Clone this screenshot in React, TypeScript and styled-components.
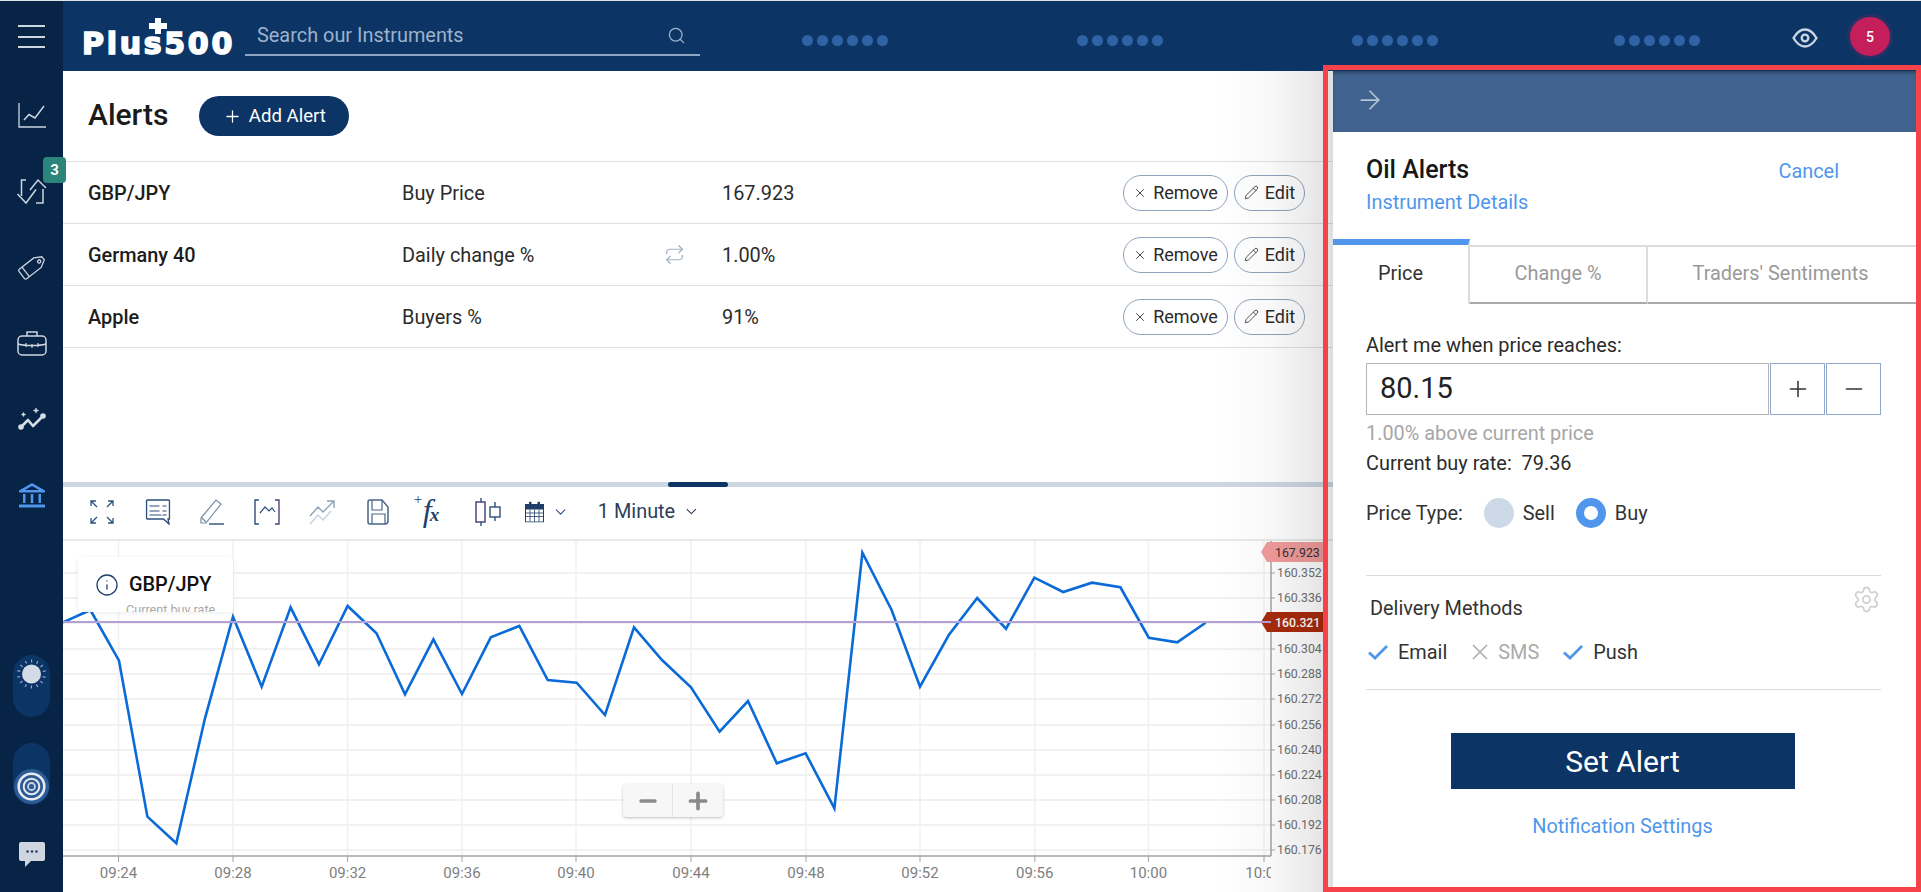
import React from "react";
import styled, { createGlobalStyle } from "styled-components";
import { ArrowRight, ChevronDown, Info, Minus, Pencil, Plus, Repeat, Search, Settings, X } from "lucide-react";

const GlobalStyle = createGlobalStyle`
  html, body { margin: 0; padding: 0; height: 100%; overflow: hidden; background: #fff; }
  body { font-family: Roboto, "Liberation Sans", sans-serif; color: #222; }
  #root { height: 100%; }
  * { box-sizing: border-box; }
`;

const NAVY = "#0c3566";
const BLUE = "#4f96ec";
const TEXT_SIZE = "19.9px";

const Page = styled.div`
  position: relative;
  display: grid;
  grid-template-columns: 63px 1fr;
  height: 892px;
  width: 1921px;
  border-top: 1px solid #dfe3e8;
  overflow: hidden;
`;

const Sidebar = styled.aside`
  display: flex;
  flex-direction: column;
  align-items: center;
  background: #072346;
  padding-bottom: 24px;
  position: relative;
  z-index: 5;
`;
const Burger = styled.div`
  height: 76px;
  width: 27px;
  flex: none;
  display: flex;
  flex-direction: column;
  gap: 8.5px;
  padding-top: 24px;
  span { display: block; height: 2px; background: #cdd5df; }
`;
const NavItem = styled.div`
  position: relative;
  height: 76px;
  flex: none;
  width: 100%;
  display: flex;
  align-items: center;
  justify-content: center;
  svg { overflow: visible; }
`;
const Badge = styled.span`
  position: absolute;
  left: 43px;
  top: 4px;
  width: 23px;
  height: 26px;
  background: #2b8578;
  border-radius: 4px;
  color: #fff;
  font-weight: 700;
  font-size: 15px;
  display: flex;
  align-items: center;
  justify-content: center;
`;
const Toggle = styled.div<{ $down?: boolean }>`
  width: 37px;
  height: 62px;
  border-radius: 19px;
  background: ${NAVY};
  flex: none;
  position: relative;
  margin-top: ${(p) => (p.$down ? "26px" : "auto")};
  display: flex;
  justify-content: center;
  align-items: ${(p) => (p.$down ? "flex-end" : "flex-start")};
`;
const ChatWrap = styled.div`
  margin-top: 37px;
  height: 26px;
  flex: none;
`;

const Right = styled.div`
  position: relative;
  display: flex;
  flex-direction: column;
  min-width: 0;
`;
const Header = styled.header`
  height: 70px;
  flex: none;
  background: ${NAVY};
  display: flex;
  align-items: center;
  position: relative;
  z-index: 4;
`;
const Logo = styled.div`
  position: relative;
  margin-left: 19px;
  width: 151px;
  height: 70px;
  flex: none;
  color: #fff;
  font-family: "DejaVu Sans", sans-serif;
  font-weight: 700;
  font-size: 30px;
  letter-spacing: 2.7px;
  line-height: 70px;
  padding-top: 8px;
  -webkit-text-stroke: 1.6px #fff;
  white-space: nowrap;
`;
const LogoCross = styled.svg`
  position: absolute;
  left: 67px;
  top: 17px;
`;
const SearchBox = styled.div`
  margin-left: 12px;
  width: 455px;
  height: 36px;
  margin-top: 3px;
  padding: 0 12px 3px;
  border-bottom: 2px solid #8fa6c2;
  color: #9db2cb;
  font-size: ${TEXT_SIZE};
  display: flex;
  align-items: center;
  justify-content: space-between;
  svg { margin-right: 2px; }
`;
const Quotes = styled.div`
  position: relative;
  flex: 1;
  display: flex;
  align-items: center;
  padding-left: 102px;
`;
const DotGroup = styled.div<{ $w: number }>`
  width: ${(p) => p.$w}px;
  display: flex;
  gap: 4px;
  flex: none;
  margin-top: 9px;
  i { width: 11px; height: 11px; border-radius: 50%; background: #2f63a6; display: block; }
`;
const EyeWrap = styled.div`
  margin-left: auto;
  margin-right: 32px;
  display: flex;
  margin-top: 3px;
`;
const Avatar = styled.div`
  width: 40px;
  height: 39px;
  border-radius: 50%;
  background: #c41e5b;
  box-shadow: 0 0 0 3px rgba(196, 30, 91, 0.15);
  color: #fff;
  font-size: 14px;
  font-weight: 500;
  margin-right: 31px;
  margin-top: 1px;
  display: flex;
  align-items: center;
  justify-content: center;
`;

const Body = styled.main`
  position: relative;
  flex: 1;
  display: flex;
  flex-direction: column;
  min-height: 0;
`;
const ListPane = styled.section`
  height: 411px;
  flex: none;
`;
const TitleRow = styled.div`
  height: 91px;
  padding: 25px 0 0 25px;
  display: flex;
  align-items: flex-start;
  gap: 31px;
  border-bottom: 1.5px solid #e0e0e0;
`;
const PageTitle = styled.h1`
  margin: 1px 0 0;
  font-size: 30px;
  font-weight: 500;
  line-height: 36px;
  color: #1a1a1a;
`;
const AddButton = styled.button`
  height: 40px;
  width: 150px;
  border: 0;
  border-radius: 20px;
  background: ${NAVY};
  color: #fff;
  font: 400 18.6px Roboto, sans-serif;
  display: flex;
  align-items: center;
  justify-content: center;
  gap: 7px;
  padding: 0;
`;
const Row = styled.div`
  height: 62px;
  display: grid;
  grid-template-columns: 314px 262px 58px 1fr auto;
  align-items: center;
  padding: 0 616px 0 25px;
  border-bottom: 1.5px solid #e0e0e0;
  font-size: ${TEXT_SIZE};
`;
const Instrument = styled.span`
  font-weight: 500;
  color: #1d1d1d;
  padding-top: 2px;
`;
const Cell = styled.span`
  color: #2b2b2b;
  padding-top: 2px;
`;
const RepeatSlot = styled.span`
  display: flex;
  color: #a5b2c2;
`;
const Actions = styled.div`
  display: flex;
  gap: 6px;
`;
const Pill = styled.button<{ $w: number }>`
  width: ${(p) => p.$w}px;
  height: 36px;
  border-radius: 18px;
  border: 1px solid #8ea3bc;
  background: #fff;
  color: #2b2b2b;
  font: 400 18px Roboto, sans-serif;
  display: flex;
  align-items: center;
  justify-content: center;
  gap: 6px;
  padding: 0;
`;

const Splitter = styled.div`
  position: relative;
  height: 5px;
  flex: none;
  background: #cdd6e3;
`;
const SplitHandle = styled.span`
  position: absolute;
  left: 605px;
  top: 0;
  width: 60px;
  height: 5px;
  border-radius: 3px;
  background: ${NAVY};
`;
const Toolbar = styled.div`
  height: 54px;
  flex: none;
  position: relative;
  border-bottom: 2px solid #e8e8e8;
`;
const ToolSlot = styled.span<{ $x: number }>`
  position: absolute;
  left: ${(p) => p.$x}px;
  top: 25px;
  transform: translate(-50%, -50%);
  display: flex;
  align-items: center;
  color: #2d4f7c;
`;
const Fx = styled.span`
  position: relative;
  font-family: "Liberation Serif", serif;
  font-style: italic;
  color: #1f3f6b;
  line-height: 30px;
  font-size: 32px;
  display: flex;
  align-items: baseline;
  b { font-size: 19px; font-weight: 700; margin-left: -2px; }
  sup {
    position: absolute;
    left: -9px;
    top: -6px;
    font-size: 15px;
    line-height: 20px;
    font-style: normal;
  }
`;
const Interval = styled.span`
  font-size: ${TEXT_SIZE};
  color: #2b3f5a;
  display: flex;
  align-items: center;
  gap: 8px;
  white-space: nowrap;
  margin-top: -1px;
`;

const ChartArea = styled.div`
  position: relative;
  flex: 1;
  min-height: 0;
`;
const ChartSvg = styled.svg`
  display: block;
  position: absolute;
  left: 0;
  top: 0;
  text { font-family: Roboto, sans-serif; }
`;
const InstrumentCard = styled.div`
  position: absolute;
  left: 15px;
  top: 16px;
  width: 155px;
  height: 55px;
  background: rgba(255, 255, 255, 0.94);
  border-radius: 4px;
  box-shadow: 0 1px 5px rgba(0, 0, 0, 0.08);
  overflow: hidden;
  padding: 16px 0 0 17px;
`;
const CardTitle = styled.div`
  display: flex;
  align-items: center;
  gap: 10px;
  font-size: ${TEXT_SIZE};
  font-weight: 500;
  color: #111;
  line-height: 22px;
  svg { color: #1f3f6f; }
`;
const CardSub = styled.div`
  margin: 5px 0 0 31px;
  font-size: 12.6px;
  line-height: 16px;
  color: #a8a8a8;
  white-space: nowrap;
`;
const ZoomControl = styled.div`
  position: absolute;
  left: 560px;
  top: 243px;
  width: 100px;
  height: 33px;
  background: #f7f7f7;
  border-radius: 4px;
  box-shadow: 0 1px 3px rgba(0, 0, 0, 0.25);
  display: grid;
  grid-template-columns: 50px 50px;
`;
const ZoomCell = styled.span<{ $sep?: boolean }>`
  display: flex;
  align-items: center;
  justify-content: center;
  color: #8a8a8a;
  border-right: ${(p) => (p.$sep ? "1px solid #e3e3e3" : "0")};
`;

const Panel = styled.aside`
  position: absolute;
  top: 0;
  bottom: 0;
  right: 4px;
  width: 584px;
  background: #fff;
  display: flex;
  flex-direction: column;
  z-index: 2;
  &::before {
    content: "";
    position: absolute;
    top: 0;
    bottom: 0;
    left: -120px;
    width: 120px;
    background: linear-gradient(to right, rgba(0,0,0,0) 0%, rgba(0,0,0,0.025) 45%, rgba(0,0,0,0.08) 80%, rgba(0,0,0,0.13) 100%);
    pointer-events: none;
  }
`;
const PanelBar = styled.div`
  height: 61px;
  flex: none;
  background: #3f628f;
  box-shadow: inset 0 3px 3px -1px rgba(0, 0, 0, 0.3);
  color: #b7c5d6;
  display: flex;
  align-items: center;
  padding: 0 0 4px 22px;
`;
const PanelHead = styled.div`
  height: 107px;
  flex: none;
  padding: 25px 78px 0 33px;
  display: flex;
  justify-content: space-between;
  align-items: flex-start;
`;
const PanelTitle = styled.div`
  font-size: 25px;
  font-weight: 500;
  line-height: 26px;
  color: #171717;
`;
const LinkText = styled.a`
  display: block;
  color: ${BLUE};
  font-size: ${TEXT_SIZE};
  line-height: 26px;
`;
const DetailsLink = styled(LinkText)`
  margin-top: 7px;
`;
const CancelLink = styled(LinkText)`
  margin-top: 2px;
`;
const Tabs = styled.div`
  display: flex;
  height: 65px;
  flex: none;
`;
const Tab = styled.div<{ $w?: number; $active?: boolean }>`
  ${(p) => (p.$w ? `width: ${p.$w}px; flex: none;` : "flex: 1; padding-right: 4px;")}
  display: flex;
  align-items: center;
  justify-content: center;
  font-size: ${TEXT_SIZE};
  padding-bottom: 3px;
  margin-top: ${(p) => (p.$active ? "0" : "6px")};
  color: ${(p) => (p.$active ? "#333" : "#999")};
  border-top: ${(p) => (p.$active ? `6px solid ${BLUE}` : "2px solid #dcdcdc")};
  border-bottom: ${(p) => (p.$active ? "0" : "2px solid #a9a9a9")};
  border-right: 2px solid #dcdcdc;
  &:last-child { border-right: 0; }
`;
const Form = styled.div`
  padding: 30px 36px 0 33px;
  display: flex;
  flex-direction: column;
  font-size: ${TEXT_SIZE};
`;
const Line = styled.div<{ $mt?: number; $muted?: boolean }>`
  line-height: 24px;
  margin-top: ${(p) => p.$mt || 0}px;
  color: ${(p) => (p.$muted ? "#a6a6a6" : "#2b2b2b")};
`;
const Stepper = styled.div`
  display: grid;
  grid-template-columns: 1fr 55px 55px;
  gap: 1px;
  height: 52px;
  margin-top: 5px;
`;
const PriceInput = styled.div`
  border: 1px solid #b5b5b5;
  font-size: 29px;
  color: #222;
  padding: 0 0 3px 13px;
  display: flex;
  align-items: center;
`;
const StepButton = styled.div`
  border: 1px solid #8ea9c9;
  color: #333;
  display: flex;
  align-items: center;
  justify-content: center;
`;
const PriceType = styled.div`
  display: flex;
  align-items: center;
  height: 30px;
  margin-top: 22px;
  color: #333;
`;
const Radio = styled.span<{ $on?: boolean }>`
  width: 30px;
  height: 30px;
  border-radius: 50%;
  margin: 0 9px 0 21px;
  background: ${(p) => (p.$on ? "#fff" : "#cdd9e6")};
  border: ${(p) => (p.$on ? `8px solid ${BLUE}` : "0")};
  flex: none;
`;
const Rule = styled.div<{ $mt: number }>`
  height: 1px;
  background: #dcdcdc;
  margin-top: ${(p) => p.$mt}px;
  flex: none;
`;
const DeliveryHead = styled.div`
  display: flex;
  justify-content: space-between;
  align-items: flex-start;
  padding: 9px 0 0 4px;
  color: #333;
  span { margin-top: 12px; line-height: 24px; }
  svg { color: #cfcfcf; }
`;
const Methods = styled.div`
  display: flex;
  align-items: center;
  height: 24px;
  margin-top: 19px;
  padding-left: 2px;
`;
const Method = styled.span<{ $off?: boolean; $gap: number }>`
  display: flex;
  align-items: center;
  gap: 10px;
  margin-right: ${(p) => p.$gap}px;
  color: ${(p) => (p.$off ? "#aaa" : "#333")};
  svg { flex: none; }
`;
const SetAlert = styled.button`
  align-self: center;
  width: 344px;
  height: 56px;
  margin: 43px 2px 0 0;
  border: 0;
  background: ${NAVY};
  color: #fff;
  font: 400 30px Roboto, sans-serif;
  padding: 0;
  flex: none;
`;
const NotifyLink = styled(LinkText)`
  align-self: center;
  margin: 25px 2px 0 0;
`;
const Annotation = styled.div`
  position: absolute;
  left: 1323px;
  top: 64px;
  right: 0;
  bottom: 0;
  border: 5px solid #f6424a;
  pointer-events: none;
  z-index: 9;
`;

const S = "#cdd5df";
const ChartIcon = () => (
  <svg width="28" height="25" fill="none" stroke={S} strokeWidth="1.3">
    <path d="M1 0V24H28" />
    <path d="M6 17L11 11.5L17 15L26 3" strokeWidth="1.5" />
  </svg>
);
const TradeIcon = () => (
  <svg width="29" height="25" fill="none" stroke={S} strokeWidth="1.5">
    <path d="M9 1H4.5V17" />
    <path d="M0.5 15L9 24L19 10.5" />
    <path d="M13 11L21 1L29 9" />
    <path d="M26 10V24H19" />
  </svg>
);
const TagIcon = () => (
  <svg width="28" height="26" fill="none" stroke={S} strokeWidth="1.3">
    <g transform="rotate(-38 14 13)">
      <path d="M1 8.500a1.500 1.500 0 0 1 1.500-1.500H21l7 4v4l-7 4H2.500A1.500 1.500 0 0 1 1 17.500Z" />
      <path d="M6 7V19" />
      <circle cx="23" cy="13" r="1.600" />
    </g>
  </svg>
);
const CaseIcon = () => (
  <svg width="30" height="25" fill="none" stroke={S} strokeWidth="1.5">
    <rect x="1" y="5" width="28" height="19" rx="4" />
    <path d="M10 5V1H20V5" />
    <path d="M1 13C8 15 22 15 29 13" />
    <path d="M9 12V16M15 13V17M21 12V16" strokeWidth="1.2" />
  </svg>
);
const SparkIcon = () => (
  <svg width="28" height="24" fill="none" stroke="#d6dde6" strokeWidth="2.600" strokeLinecap="round" strokeLinejoin="round">
    <path d="M3 20L10 13L15 19L25 9" />
    <circle cx="3" cy="20" r="1.500" fill="#d6dde6" />
    <circle cx="25" cy="9" r="1.500" fill="#d6dde6" />
    <path d="M4 7.500H7M5.500 6V9M16 3.500H20M18 1.500V5.500" strokeWidth="1.400" />
  </svg>
);
const BankIcon = () => (
  <svg width="26" height="25" fill={BLUE} stroke="none">
    <path d="M13 0L26 7.500V9.500H0V7.500ZM13 3L6 7H20Z" fillRule="evenodd" />
    <rect x="4" y="11" width="2.500" height="9" />
    <rect x="11.750" y="11" width="2.500" height="9" />
    <rect x="19.500" y="11" width="2.500" height="9" />
    <rect x="0" y="21.500" width="26" height="3" />
  </svg>
);
const SunKnob = () => {
  const rays = Array.from({ length: 14 }, (_, i) => (i * 360) / 14);
  return (
    <svg width="37" height="37" viewBox="0 0 37 37">
      <circle cx="18.500" cy="19" r="9.500" fill="#d3dbe6" />
      {rays.map((r) => (
        <rect key={r} x="18" y="4.500" width="1.200" height="3" fill="#93a8c2" transform={`rotate(${r} 18.500 19)`} />
      ))}
    </svg>
  );
};
const TargetKnob = () => (
  <svg width="37" height="37" viewBox="0 0 37 37">
    <circle cx="18.500" cy="18.500" r="17.500" fill="#2b5a95" />
    <circle cx="18.500" cy="18.500" r="12.800" fill="none" stroke="#e5eaf1" strokeWidth="2.600" />
    <circle cx="18.500" cy="18.500" r="7.800" fill="none" stroke="#e5eaf1" strokeWidth="2" />
    <circle cx="18.500" cy="18.500" r="3.500" fill="none" stroke="#c9d4e3" strokeWidth="1.800" />
  </svg>
);
const ChatIcon = () => (
  <svg width="26" height="26" viewBox="0 0 26 26">
    <path d="M2 0H24a2 2 0 0 1 2 2V17a2 2 0 0 1-2 2H12L6 25V19H2a2 2 0 0 1-2-2V2a2 2 0 0 1 2-2Z" fill="#cfd6e0" />
    <circle cx="8.500" cy="9.500" r="1.300" fill="#2a3f5f" />
    <circle cx="13" cy="9.500" r="1.300" fill="#2a3f5f" />
    <circle cx="17.500" cy="9.500" r="1.300" fill="#2a3f5f" />
  </svg>
);
const EyeIcon = () => (
  <svg width="26" height="20" viewBox="0 0 26 20" fill="none" stroke="#ccd6e2" strokeWidth="2.300">
    <path d="M1.500 10C5 4 9 1.500 13 1.500S21 4 24.500 10C21 16 17 18.500 13 18.500S5 16 1.500 10Z" />
    <circle cx="13" cy="10" r="3.300" />
  </svg>
);
const CheckMark = () => (
  <svg width="20" height="15" viewBox="0 0 20 15" fill="none" stroke={BLUE} strokeWidth="2.800">
    <path d="M1 7.500L7 13L19 1" />
  </svg>
);
const CrossMark = () => (
  <svg width="16" height="16" viewBox="0 0 16 16" fill="none" stroke="#a9a9a9" strokeWidth="1.500">
    <path d="M1 1L15 15M15 1L1 15" />
  </svg>
);

const ExpandIcon = () => (
  <svg width="24" height="24" fill="none" stroke="#2d4f7c" strokeWidth="1.300">
    <path d="M1 6V1H6M1 1L7 7" /><path d="M23 6V1H18M23 1L17 7" /><path d="M1 18V23H6M1 23L7 17" /><path d="M23 18V23H18M23 23L17 17" />
  </svg>
);
const NoteIcon = () => (
  <svg width="25" height="26" fill="none" stroke="#2d4f7c" strokeWidth="1.400">
    <path d="M2 1H23a1 1 0 0 1 1 1V20H22.500L23.500 25L18 20H2a1 1 0 0 1-1-1V2a1 1 0 0 1 1-1Z" />
    <path d="M4 7H14M4 12H14M17 12H21M4 16H16M17 16H21M17 7H21" strokeWidth="1.200" />
  </svg>
);
const PenIcon = () => (
  <svg width="24" height="26" fill="none" stroke="#7a8ca4" strokeWidth="1.200">
    <path d="M1 19L16 1L21 5L6 24H1Z" />
    <path d="M2 19L6 23" />
    <path d="M9 25H24" stroke="#2d4f7c" strokeWidth="1.400" />
  </svg>
);
const RangeIcon = () => (
  <svg width="26" height="26" fill="none" strokeWidth="1.400">
    <path d="M5 1H1V25H5" stroke="#2d4f7c" />
    <path d="M21 1H25V25H21" stroke="#5a3f7c" />
    <path d="M6 14L11 8L15 12L18 9L21 13" stroke="#2d4f7c" strokeWidth="1.200" />
  </svg>
);
const TrendIcon = () => (
  <svg width="26" height="26" fill="none" strokeWidth="1.400">
    <path d="M1 17L9 8L14 13L25 2M18 2H25V9" stroke="#8fa2bb" />
    <path d="M1 25L9 16L14 21L22 12" stroke="#c8d2df" />
  </svg>
);
const SaveIcon = () => (
  <svg width="22" height="26" fill="none" stroke="#4a6487" strokeWidth="1.500">
    <path d="M3 1H15L21 8V22a3 3 0 0 1-3 3H3a2 2 0 0 1-2-2V3a2 2 0 0 1 2-2Z" />
    <path d="M5 1V11H15V1" strokeWidth="1.200" />
    <path d="M5 25V15H18V25" strokeWidth="1.200" />
  </svg>
);
const CandleIcon = () => (
  <svg width="26" height="28" fill="none" stroke="#2d4f7c" strokeWidth="1.400">
    <path d="M6 0V4M6 24V28" />
    <rect x="1" y="4" width="9" height="20" stroke="#3d3a7c" />
    <path d="M20 4V9M20 19V23" />
    <rect x="15" y="9" width="10" height="10" />
  </svg>
);
const CalendarIcon = () => (
  <svg width="19" height="21" viewBox="0 0 19 21">
    <rect x="0.500" y="3" width="18" height="17.500" fill="#fff" stroke="#1f3f6b" />
    <rect x="0.500" y="3" width="18" height="5" fill="#1f3f6b" />
    <rect x="4" y="0" width="2.500" height="5" rx="1" fill="#1f3f6b" />
    <rect x="12.500" y="0" width="2.500" height="5" rx="1" fill="#1f3f6b" />
    <path d="M5 8V20M9.500 8V20M14 8V20M1 11.500H18M1 15H18" stroke="#1f3f6b" strokeWidth="0.800" fill="none" />
  </svg>
);

const LINE = [
  [63, 622.3], [90.4, 610], [119, 660.7], [147.4, 816.7], [176.3, 843.3], [205, 718.3], [233, 616.7],
  [261.7, 686.7], [290.6, 607.3], [319, 664.3], [347.6, 606], [376.5, 633.3], [405, 694.3], [433.4, 639.3],
  [462, 694], [490.8, 637.3], [519.3, 626], [547.7, 680], [576.7, 682.7], [605, 715], [634, 627.3], [662, 660],
  [691, 687.3], [719.6, 731.7], [748, 701], [776.8, 763.3], [805.6, 753.3], [834.4, 808.3], [862.4, 552.7],
  [891.6, 610], [920, 686.7], [948.8, 635], [977.2, 598], [1006, 628.7], [1034.4, 577.7], [1063.2, 592],
  [1092, 582.7], [1120.4, 587.3], [1148.8, 637.7], [1177.2, 642.3], [1205.6, 622.7],
];
const H_GRID = [
  [573, "160.352"], [598, "160.336"], [649, "160.304"], [674, "160.288"], [699, "160.272"], [725, "160.256"],
  [750, "160.240"], [775, "160.224"], [800, "160.208"], [825, "160.192"], [850, "160.176"],
] as const;
const V_GRID = [
  [118.5, "09:24"], [233, "09:28"], [347.6, "09:32"], [462, "09:36"], [576, "09:40"], [691, "09:44"],
  [806, "09:48"], [920, "09:52"], [1034.8, "09:56"], [1148.4, "10:00"], [1264, "10:04"],
] as const;

const Chart = () => (
  <ChartSvg width="1260" height="351" viewBox="63 541 1260 351">
    <defs>
      <clipPath id="axisClip"><rect x="63" y="541" width="1208" height="351" /></clipPath>
    </defs>
    {[...H_GRID.map((g) => g[0]), 623].map((y) => (
      <line key={y} x1="63" x2="1271" y1={y} y2={y} stroke="#f1f1f1" strokeWidth="2" />
    ))}
    {V_GRID.map(([x]) => (
      <line key={x} x1={x} x2={x} y1="541" y2="856" stroke="#f0f0f0" strokeWidth="1.500" />
    ))}
    <polyline points={LINE.map((p) => p.join(",")).join(" ")} fill="none" stroke="#0a6ad8" strokeWidth="2.600" />
    <line x1="63" x2="1271" y1="622" y2="622" stroke="#b3a0d6" strokeWidth="2" />
    <line x1="63" x2="1271" y1="856" y2="856" stroke="#a3a3a3" strokeWidth="1.500" />
    <line x1="1271" x2="1271" y1="541" y2="856" stroke="#a3a3a3" strokeWidth="1.500" />
    {V_GRID.map(([x]) => (
      <line key={x} x1={x} x2={x} y1="856" y2="862" stroke="#a3a3a3" strokeWidth="1" />
    ))}
    <g clipPath="url(#axisClip)">
      {V_GRID.map(([x, t]) => (
        <text key={t} x={x} y="878" textAnchor="middle" fontSize="15" fill="#808080">{t}</text>
      ))}
    </g>
    {H_GRID.map(([y, t]) => (
      <g key={t}>
        <line x1="1271" x2="1275" y1={y} y2={y} stroke="#a3a3a3" />
        <text x="1277" y={y + 3.5} fontSize="12.300" fill="#707070">{t}</text>
      </g>
    ))}
    <path d="M1261 552L1267 542H1323V562H1267Z" fill="#f29b9b" />
    <text x="1275" y="556.500" fontSize="12.300" fill="#333">167.923</text>
    <path d="M1261 622L1267 612H1323V632H1267Z" fill="#a82b0c" />
    <text x="1275" y="626.500" fontSize="12.300" fontWeight="500" fill="#fff">160.321</text>
    <line x1="1261" x2="1271" y1="622" y2="622" stroke="#b3a0d6" strokeWidth="2" />
  </ChartSvg>
);

const rows = [
  { name: "GBP/JPY", kind: "Buy Price", value: "167.923", recurring: false },
  { name: "Germany 40", kind: "Daily change %", value: "1.00%", recurring: true },
  { name: "Apple", kind: "Buyers %", value: "91%", recurring: false },
];

const Dots = ({ w }: { w: number }) => (
  <DotGroup $w={w}>
    {[0, 1, 2, 3, 4, 5].map((i) => <i key={i} />)}
  </DotGroup>
);

export default function App() {
  return (
    <Page>
      <GlobalStyle />
      <Sidebar>
        <Burger><span /><span /><span /></Burger>
        <NavItem><ChartIcon /></NavItem>
        <NavItem><TradeIcon /><Badge>3</Badge></NavItem>
        <NavItem><TagIcon /></NavItem>
        <NavItem><CaseIcon /></NavItem>
        <NavItem><SparkIcon /></NavItem>
        <NavItem><BankIcon /></NavItem>
        <Toggle><SunKnob /></Toggle>
        <Toggle $down><TargetKnob /></Toggle>
        <ChatWrap><ChatIcon /></ChatWrap>
      </Sidebar>
      <Right>
        <Header>
          <Logo>
            Plus500
            <LogoCross width="18" height="16" viewBox="0 0 18 16"><path d="M6 0H12V5H18V11H12V16H6V11H0V5H6Z" fill="#fff" /></LogoCross>
          </Logo>
          <SearchBox>
            Search our Instruments
            <Search size={19} strokeWidth={1.6} />
          </SearchBox>
          <Quotes>
            <Dots w={275} />
            <Dots w={275} />
            <Dots w={262} />
            <Dots w={100} />
            <EyeWrap><EyeIcon /></EyeWrap>
            <Avatar>5</Avatar>
          </Quotes>
        </Header>
        <Body>
          <ListPane>
            <TitleRow>
              <PageTitle>Alerts</PageTitle>
              <AddButton><Plus size={19} strokeWidth={1.6} />Add Alert</AddButton>
            </TitleRow>
            {rows.map((r) => (
              <Row key={r.name}>
                <Instrument>{r.name}</Instrument>
                <Cell>{r.kind}</Cell>
                <RepeatSlot>{r.recurring && <Repeat size={21} strokeWidth={1.4} />}</RepeatSlot>
                <Cell>{r.value}</Cell>
                <Actions>
                  <Pill $w={105}><X size={14} strokeWidth={1.5} />Remove</Pill>
                  <Pill $w={71}><Pencil size={15} strokeWidth={1.3} />Edit</Pill>
                </Actions>
              </Row>
            ))}
          </ListPane>
          <Splitter><SplitHandle /></Splitter>
          <Toolbar>
            <ToolSlot $x={39}><ExpandIcon /></ToolSlot>
            <ToolSlot $x={95}><NoteIcon /></ToolSlot>
            <ToolSlot $x={149}><PenIcon /></ToolSlot>
            <ToolSlot $x={204}><RangeIcon /></ToolSlot>
            <ToolSlot $x={259}><TrendIcon /></ToolSlot>
            <ToolSlot $x={315}><SaveIcon /></ToolSlot>
            <ToolSlot $x={368}><Fx><sup>+</sup>f<b>x</b></Fx></ToolSlot>
            <ToolSlot $x={425}><CandleIcon /></ToolSlot>
            <ToolSlot $x={484}><CalendarIcon /><ChevronDown size={17} strokeWidth={1.5} style={{ marginLeft: 8 }} /></ToolSlot>
            <ToolSlot $x={586}><Interval>1 Minute<ChevronDown size={17} strokeWidth={1.5} /></Interval></ToolSlot>
          </Toolbar>
          <ChartArea>
            <Chart />
            <InstrumentCard>
              <CardTitle><Info size={24} strokeWidth={1.3} />GBP/JPY</CardTitle>
              <CardSub>Current buy rate</CardSub>
            </InstrumentCard>
            <ZoomControl>
              <ZoomCell $sep><Minus size={24} strokeWidth={3.4} /></ZoomCell>
              <ZoomCell><Plus size={26} strokeWidth={3.4} /></ZoomCell>
            </ZoomControl>
          </ChartArea>
          <Panel>
            <PanelBar><ArrowRight size={30} strokeWidth={1.4} /></PanelBar>
            <PanelHead>
              <div>
                <PanelTitle>Oil Alerts</PanelTitle>
                <DetailsLink>Instrument Details</DetailsLink>
              </div>
              <CancelLink>Cancel</CancelLink>
            </PanelHead>
            <Tabs>
              <Tab $w={137} $active>Price</Tab>
              <Tab $w={178}>Change %</Tab>
              <Tab>Traders' Sentiments</Tab>
            </Tabs>
            <Form>
              <Line>Alert me when price reaches:</Line>
              <Stepper>
                <PriceInput>80.15</PriceInput>
                <StepButton><Plus size={26} strokeWidth={1.4} /></StepButton>
                <StepButton><Minus size={26} strokeWidth={1.4} /></StepButton>
              </Stepper>
              <Line $mt={7} $muted>1.00% above current price</Line>
              <Line $mt={6}>Current buy rate:&nbsp; 79.36</Line>
              <PriceType>
                Price Type:
                <Radio />Sell
                <Radio $on />Buy
              </PriceType>
              <Rule $mt={47} />
              <DeliveryHead><span>Delivery Methods</span><Settings size={29} strokeWidth={1.4} /></DeliveryHead>
              <Methods>
                <Method $gap={25}><CheckMark />Email</Method>
                <Method $off $gap={24}><CrossMark />SMS</Method>
                <Method $gap={0}><CheckMark />Push</Method>
              </Methods>
              <Rule $mt={25} />
              <SetAlert>Set Alert</SetAlert>
              <NotifyLink>Notification Settings</NotifyLink>
            </Form>
          </Panel>
        </Body>
      </Right>
      <Annotation />
    </Page>
  );
}
